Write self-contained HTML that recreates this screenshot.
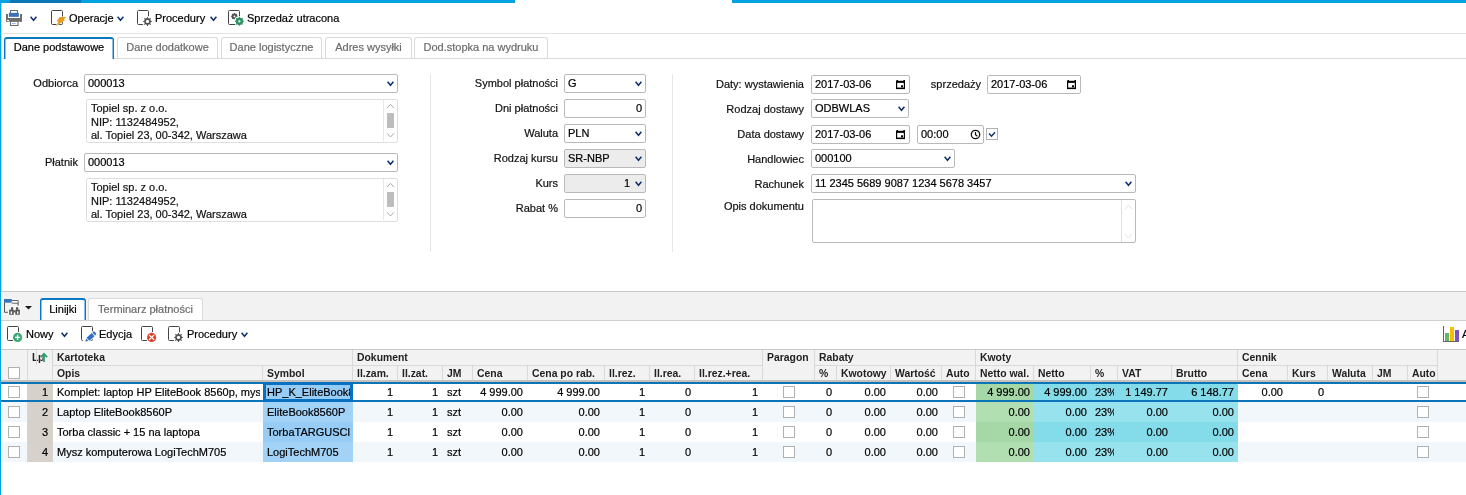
<!DOCTYPE html><html><head><meta charset="utf-8"><style>
html,body{margin:0;padding:0;}
body{width:1466px;height:495px;overflow:hidden;position:relative;will-change:transform;background:#fff;font-family:"Liberation Sans",sans-serif;font-size:11px;color:#000;}
div,svg{position:absolute;}
.t{white-space:nowrap;line-height:13px;height:13px;-webkit-text-stroke-width:0.2px;}
.hb{font-weight:bold;font-size:10.4px;color:#222;-webkit-text-stroke-width:0;}
.inp{border:1px solid #b9b9b9;border-radius:2px;background:#fff;box-sizing:border-box;}
.cb{border:1px solid #b0b0b0;background:#fff;box-sizing:border-box;}
</style></head><body>
<div style="left:0px;top:0px;width:1466px;height:3px;background:#00a3e0"></div>
<div style="left:10px;top:0px;width:71px;height:3px;background:#0a76b6"></div>
<div style="left:515px;top:0px;width:217px;height:3px;background:#fff"></div>
<div style="left:0px;top:0px;width:1px;height:495px;background:#00a3e0"></div>
<div style="left:1px;top:3px;width:1px;height:288px;background:#d8d0d0"></div>
<svg style="left:6px;top:10px" width="16" height="16" viewBox="0 0 16 16">
<rect x="4.5" y="0.5" width="7" height="4" fill="#fff" stroke="#6e6e6e" stroke-width="1.1"/>
<rect x="0" y="4" width="2" height="7.7" fill="#6e6e6e"/>
<rect x="14" y="4" width="2" height="7.7" fill="#6e6e6e"/>
<rect x="0" y="8" width="16" height="3.7" fill="#6e6e6e"/>
<rect x="1" y="10" width="2" height="1" fill="#fff"/>
<rect x="2.85" y="2.85" width="10" height="4" fill="#3a72b8"/>
<rect x="4.5" y="11.3" width="7.5" height="4.2" fill="#fff" stroke="#6e6e6e" stroke-width="1.1"/>
<rect x="6" y="13.2" width="3.7" height="0.7" fill="#6a9ad0"/>
</svg>
<svg style="left:30px;top:16px;overflow:visible" width="7" height="5" viewBox="0 0 7 5"><path d="M0.60 0.75 L3.50 4.25 L6.40 0.75" fill="none" stroke="#0d2f6b" stroke-width="1.5"/></svg>
<svg style="left:51px;top:10px" width="12" height="15" viewBox="0 0 12 15"><rect x="0.5" y="0.5" width="11" height="14" rx="1" fill="none" stroke="#444" stroke-width="1"/></svg>
<svg style="left:54px;top:15px" width="14" height="13" viewBox="54 15 14 13"><polygon points="59.6,16.9 66.2,16.9 63.6,19.7 65.6,19.7 55.8,26.2 58.6,21.6 56.4,21.6" fill="#e89c1e" stroke="#fff" stroke-width="0.9" stroke-linejoin="round" paint-order="stroke"/></svg>
<div class="t" style="left:69px;top:12px;">Operacje</div>
<svg style="left:117px;top:16px;overflow:visible" width="7" height="5" viewBox="0 0 7 5"><path d="M0.60 0.75 L3.50 4.25 L6.40 0.75" fill="none" stroke="#0d2f6b" stroke-width="1.5"/></svg>
<svg style="left:137px;top:10px" width="12" height="15" viewBox="0 0 12 15"><rect x="0.5" y="0.5" width="11" height="14" rx="1" fill="none" stroke="#444" stroke-width="1"/></svg>
<svg style="left:141px;top:15px" width="13" height="13" viewBox="141 15 13 13"><circle cx="147.5" cy="21.4" r="5.4" fill="#fff"/><polygon points="146.83,18.41 147.04,16.92 147.96,16.92 148.17,18.41 149.14,18.82 150.34,17.91 150.99,18.56 150.08,19.76 150.49,20.73 151.98,20.94 151.98,21.86 150.49,22.07 150.08,23.04 150.99,24.24 150.34,24.89 149.14,23.98 148.17,24.39 147.96,25.88 147.04,25.88 146.83,24.39 145.86,23.98 144.66,24.89 144.01,24.24 144.92,23.04 144.51,22.07 143.02,21.86 143.02,20.94 144.51,20.73 144.92,19.76 144.01,18.56 144.66,17.91 145.86,18.82" fill="#505050"/><circle cx="147.5" cy="21.4" r="3.12" fill="#505050"/><circle cx="147.5" cy="21.4" r="1.62" fill="#fff"/></svg>
<div class="t" style="left:155px;top:12px;">Procedury</div>
<svg style="left:210px;top:16px;overflow:visible" width="7" height="5" viewBox="0 0 7 5"><path d="M0.60 0.75 L3.50 4.25 L6.40 0.75" fill="none" stroke="#0d2f6b" stroke-width="1.5"/></svg>
<svg style="left:228px;top:10px" width="12" height="15" viewBox="0 0 12 15"><rect x="0.5" y="0.5" width="11" height="14" rx="1" fill="none" stroke="#444" stroke-width="1"/></svg>
<svg style="left:229px;top:11px" width="19" height="17" viewBox="229 11 19 17"><polygon points="233.90,13.74 234.14,12.92 234.86,12.92 235.10,13.74 235.96,14.09 236.71,13.69 237.21,14.19 236.81,14.94 237.16,15.80 237.98,16.04 237.98,16.76 237.16,17.00 236.81,17.86 237.21,18.61 236.71,19.11 235.96,18.71 235.10,19.06 234.86,19.88 234.14,19.88 233.90,19.06 233.04,18.71 232.29,19.11 231.79,18.61 232.19,17.86 231.84,17.00 231.02,16.76 231.02,16.04 231.84,15.80 232.19,14.94 231.79,14.19 232.29,13.69 233.04,14.09" fill="#555"/><circle cx="234.5" cy="16.4" r="2.78" fill="#555"/><circle cx="234.5" cy="16.4" r="0.84" fill="#fff"/><circle cx="239.4" cy="21.3" r="5.4" fill="#fff"/><polygon points="238.63,17.87 238.94,16.82 239.86,16.82 240.17,17.87 241.28,18.34 242.24,17.81 242.89,18.46 242.36,19.42 242.83,20.53 243.88,20.84 243.88,21.76 242.83,22.07 242.36,23.18 242.89,24.14 242.24,24.79 241.28,24.26 240.17,24.73 239.86,25.78 238.94,25.78 238.63,24.73 237.52,24.26 236.56,24.79 235.91,24.14 236.44,23.18 235.97,22.07 234.92,21.76 234.92,20.84 235.97,20.53 236.44,19.42 235.91,18.46 236.56,17.81 237.52,18.34" fill="#2f9462"/><circle cx="239.4" cy="21.3" r="3.58" fill="#2f9462"/><circle cx="239.4" cy="21.3" r="1.12" fill="#fff"/></svg>
<div class="t" style="left:247px;top:12px;">Sprzedaż utracona</div>
<div style="left:1px;top:33px;width:1465px;height:1px;background:#e3e3e3"></div>
<div style="left:1px;top:58px;width:1465px;height:1px;background:#d9d9d9"></div>
<div style="left:4px;top:37px;width:110px;height:22px;box-sizing:border-box;border:1px solid #0a78c2;border-top:2px solid #0a78c2;border-bottom:none;border-radius:3px 3px 0 0;background:#fff;box-shadow:inset 1px 0 0 #8cc0e6,inset -1px 0 0 #8cc0e6"></div>
<div class="t" style="left:4px;top:41px;width:110px;text-align:center;color:#000">Dane podstawowe</div>
<div style="left:117px;top:37px;width:101px;height:21px;box-sizing:border-box;border:1px solid #dadada;border-bottom:none;border-radius:3px 3px 0 0;background:#fff"></div>
<div class="t" style="left:117px;top:41px;width:101px;text-align:center;color:#6b6b6b">Dane dodatkowe</div>
<div style="left:221px;top:37px;width:101px;height:21px;box-sizing:border-box;border:1px solid #dadada;border-bottom:none;border-radius:3px 3px 0 0;background:#fff"></div>
<div class="t" style="left:221px;top:41px;width:101px;text-align:center;color:#6b6b6b">Dane logistyczne</div>
<div style="left:325px;top:37px;width:87px;height:21px;box-sizing:border-box;border:1px solid #dadada;border-bottom:none;border-radius:3px 3px 0 0;background:#fff"></div>
<div class="t" style="left:325px;top:41px;width:87px;text-align:center;color:#6b6b6b">Adres wysyłki</div>
<div style="left:414px;top:37px;width:134px;height:21px;box-sizing:border-box;border:1px solid #dadada;border-bottom:none;border-radius:3px 3px 0 0;background:#fff"></div>
<div class="t" style="left:414px;top:41px;width:134px;text-align:center;color:#6b6b6b">Dod.stopka na wydruku</div>
<div class="t" style="left:-322px;top:77px;width:400px;text-align:right;color:#111">Odbiorca</div>
<div class="inp" style="left:84px;top:74px;width:314px;height:19px;background:#fff"></div>
<div class="t" style="left:88px;top:77px;color:#000">000013</div>
<svg style="left:387px;top:81px;overflow:visible" width="7" height="5" viewBox="0 0 7 5"><path d="M0.60 0.75 L3.50 4.25 L6.40 0.75" fill="none" stroke="#0d2f6b" stroke-width="1.5"/></svg>
<div style="left:86px;top:99px;width:312px;height:44px;box-sizing:border-box;border:1px solid #dedede;border-radius:2px;background:#fff"></div>
<div style="left:383px;top:100px;width:1px;height:41px;background:#e6e6e6"></div>
<div class="t" style="left:91px;top:102px;color:#111">Topiel sp. z o.o.</div>
<div class="t" style="left:91px;top:116px;color:#111">NIP: 1132484952,</div>
<div class="t" style="left:91px;top:129px;color:#111">al. Topiel 23, 00-342, Warszawa</div>
<svg style="left:386px;top:103px" width="9" height="36" viewBox="0 0 9 36"><path d="M1.2 5 L4.5 1.3 L7.8 5 M1.2 30.3 L4.5 34 L7.8 30.3" fill="none" stroke="#ababab" stroke-width="1"/></svg>
<div style="left:387px;top:113px;width:7px;height:15px;background:#bdbdbd"></div>
<div class="t" style="left:-322px;top:156px;width:400px;text-align:right;color:#111">Płatnik</div>
<div class="inp" style="left:84px;top:153px;width:314px;height:19px;background:#fff"></div>
<div class="t" style="left:88px;top:156px;color:#000">000013</div>
<svg style="left:387px;top:160px;overflow:visible" width="7" height="5" viewBox="0 0 7 5"><path d="M0.60 0.75 L3.50 4.25 L6.40 0.75" fill="none" stroke="#0d2f6b" stroke-width="1.5"/></svg>
<div style="left:86px;top:178px;width:312px;height:44px;box-sizing:border-box;border:1px solid #dedede;border-radius:2px;background:#fff"></div>
<div style="left:383px;top:179px;width:1px;height:41px;background:#e6e6e6"></div>
<div class="t" style="left:91px;top:181px;color:#111">Topiel sp. z o.o.</div>
<div class="t" style="left:91px;top:195px;color:#111">NIP: 1132484952,</div>
<div class="t" style="left:91px;top:208px;color:#111">al. Topiel 23, 00-342, Warszawa</div>
<svg style="left:386px;top:182px" width="9" height="36" viewBox="0 0 9 36"><path d="M1.2 5 L4.5 1.3 L7.8 5 M1.2 30.3 L4.5 34 L7.8 30.3" fill="none" stroke="#ababab" stroke-width="1"/></svg>
<div style="left:387px;top:192px;width:7px;height:15px;background:#bdbdbd"></div>
<div style="left:430px;top:74px;width:1px;height:178px;background:#e6e6e6"></div>
<div style="left:672px;top:74px;width:1px;height:178px;background:#e6e6e6"></div>
<div class="t" style="left:158px;top:77px;width:400px;text-align:right;color:#111">Symbol płatności</div>
<div class="inp" style="left:564px;top:74px;width:82px;height:19px;background:#fff"></div>
<div class="t" style="left:568px;top:77px;color:#000">G</div>
<svg style="left:635px;top:81px;overflow:visible" width="7" height="5" viewBox="0 0 7 5"><path d="M0.60 0.75 L3.50 4.25 L6.40 0.75" fill="none" stroke="#0d2f6b" stroke-width="1.5"/></svg>
<div class="t" style="left:158px;top:102px;width:400px;text-align:right;color:#111">Dni płatności</div>
<div class="inp" style="left:564px;top:99px;width:82px;height:19px;background:#fff"></div>
<div class="t" style="left:242px;top:102px;width:400px;text-align:right;color:#000">0</div>
<div class="t" style="left:158px;top:127px;width:400px;text-align:right;color:#111">Waluta</div>
<div class="inp" style="left:564px;top:124px;width:82px;height:19px;background:#fff"></div>
<div class="t" style="left:568px;top:127px;color:#000">PLN</div>
<svg style="left:635px;top:131px;overflow:visible" width="7" height="5" viewBox="0 0 7 5"><path d="M0.60 0.75 L3.50 4.25 L6.40 0.75" fill="none" stroke="#0d2f6b" stroke-width="1.5"/></svg>
<div class="t" style="left:158px;top:152px;width:400px;text-align:right;color:#111">Rodzaj kursu</div>
<div class="inp" style="left:564px;top:149px;width:82px;height:19px;background:#ececec"></div>
<div class="t" style="left:568px;top:152px;color:#000">SR-NBP</div>
<svg style="left:635px;top:156px;overflow:visible" width="7" height="5" viewBox="0 0 7 5"><path d="M0.60 0.75 L3.50 4.25 L6.40 0.75" fill="none" stroke="#0d2f6b" stroke-width="1.5"/></svg>
<div class="t" style="left:158px;top:177px;width:400px;text-align:right;color:#111">Kurs</div>
<div class="inp" style="left:564px;top:174px;width:82px;height:19px;background:#ececec"></div>
<div class="t" style="left:230px;top:177px;width:400px;text-align:right;color:#000">1</div>
<svg style="left:635px;top:181px;overflow:visible" width="7" height="5" viewBox="0 0 7 5"><path d="M0.60 0.75 L3.50 4.25 L6.40 0.75" fill="none" stroke="#0d2f6b" stroke-width="1.5"/></svg>
<div class="t" style="left:158px;top:202px;width:400px;text-align:right;color:#111">Rabat %</div>
<div class="inp" style="left:564px;top:199px;width:82px;height:19px;background:#fff"></div>
<div class="t" style="left:242px;top:202px;width:400px;text-align:right;color:#000">0</div>
<div class="t" style="left:404px;top:78px;width:400px;text-align:right;color:#111">Daty: wystawienia</div>
<div class="inp" style="left:811px;top:75px;width:99px;height:19px"></div>
<div class="t" style="left:815px;top:78px;color:#000">2017-03-06</div>
<svg style="left:896px;top:80px" width="9" height="10" viewBox="0 0 9 10"><rect x="0.6" y="1.8" width="7.8" height="6.6" fill="none" stroke="#000" stroke-width="1.2"/><rect x="0" y="0.8" width="9" height="2" fill="#000"/><rect x="0.5" y="0" width="1.5" height="1" fill="#000"/><rect x="7.4" y="0" width="1.5" height="1" fill="#000"/><rect x="5" y="5.3" width="2" height="2" fill="#000"/><rect x="0" y="7.7" width="9" height="1.4" fill="#000"/></svg>
<div class="t" style="left:581px;top:78px;width:400px;text-align:right;color:#111">sprzedaży</div>
<div class="inp" style="left:987px;top:75px;width:94px;height:19px"></div>
<div class="t" style="left:991px;top:78px;color:#000">2017-03-06</div>
<svg style="left:1067px;top:80px" width="9" height="10" viewBox="0 0 9 10"><rect x="0.6" y="1.8" width="7.8" height="6.6" fill="none" stroke="#000" stroke-width="1.2"/><rect x="0" y="0.8" width="9" height="2" fill="#000"/><rect x="0.5" y="0" width="1.5" height="1" fill="#000"/><rect x="7.4" y="0" width="1.5" height="1" fill="#000"/><rect x="5" y="5.3" width="2" height="2" fill="#000"/><rect x="0" y="7.7" width="9" height="1.4" fill="#000"/></svg>
<div class="t" style="left:404px;top:103px;width:400px;text-align:right;color:#111">Rodzaj dostawy</div>
<div class="inp" style="left:811px;top:99px;width:98px;height:19px;background:#fff"></div>
<div class="t" style="left:815px;top:102px;color:#000">ODBWLAS</div>
<svg style="left:898px;top:106px;overflow:visible" width="7" height="5" viewBox="0 0 7 5"><path d="M0.60 0.75 L3.50 4.25 L6.40 0.75" fill="none" stroke="#0d2f6b" stroke-width="1.5"/></svg>
<div class="t" style="left:404px;top:128px;width:400px;text-align:right;color:#111">Data dostawy</div>
<div class="inp" style="left:811px;top:125px;width:99px;height:19px"></div>
<div class="t" style="left:815px;top:128px;color:#000">2017-03-06</div>
<svg style="left:896px;top:130px" width="9" height="10" viewBox="0 0 9 10"><rect x="0.6" y="1.8" width="7.8" height="6.6" fill="none" stroke="#000" stroke-width="1.2"/><rect x="0" y="0.8" width="9" height="2" fill="#000"/><rect x="0.5" y="0" width="1.5" height="1" fill="#000"/><rect x="7.4" y="0" width="1.5" height="1" fill="#000"/><rect x="5" y="5.3" width="2" height="2" fill="#000"/><rect x="0" y="7.7" width="9" height="1.4" fill="#000"/></svg>
<div class="inp" style="left:917px;top:125px;width:67px;height:19px"></div>
<div class="t" style="left:921px;top:128px;color:#000">00:00</div>
<svg style="left:970px;top:129px" width="11" height="11" viewBox="0 0 11 11"><circle cx="5.5" cy="5.5" r="4.2" fill="none" stroke="#111" stroke-width="1.3"/><path d="M5.5 3 V5.7 L7.3 7.2" fill="none" stroke="#111" stroke-width="1.2"/></svg>
<div class="cb" style="left:986px;top:128px;width:12px;height:12px"></div>
<svg style="left:986px;top:128px" width="12" height="12" viewBox="986 128 12 12"><path d="M989.1 133.5 L991.5 136.3 L995 132.3" fill="none" stroke="#0d2f6b" stroke-width="1.4"/></svg>
<div class="t" style="left:404px;top:153px;width:400px;text-align:right;color:#111">Handlowiec</div>
<div class="inp" style="left:811px;top:149px;width:144px;height:19px;background:#fff"></div>
<div class="t" style="left:815px;top:152px;color:#000">000100</div>
<svg style="left:944px;top:156px;overflow:visible" width="7" height="5" viewBox="0 0 7 5"><path d="M0.60 0.75 L3.50 4.25 L6.40 0.75" fill="none" stroke="#0d2f6b" stroke-width="1.5"/></svg>
<div class="t" style="left:404px;top:178px;width:400px;text-align:right;color:#111">Rachunek</div>
<div class="inp" style="left:811px;top:174px;width:325px;height:19px;background:#fff"></div>
<div class="t" style="left:815px;top:177px;color:#000">11 2345 5689 9087 1234 5678 3457</div>
<svg style="left:1125px;top:181px;overflow:visible" width="7" height="5" viewBox="0 0 7 5"><path d="M0.60 0.75 L3.50 4.25 L6.40 0.75" fill="none" stroke="#0d2f6b" stroke-width="1.5"/></svg>
<div class="t" style="left:404px;top:200px;width:400px;text-align:right;color:#111">Opis dokumentu</div>
<div style="left:812px;top:199px;width:324px;height:44px;box-sizing:border-box;border:1px solid #b9b9b9;border-radius:2px"></div>
<div style="left:1121px;top:200px;width:1px;height:42px;background:#e0e0e0"></div>
<svg style="left:1124px;top:204px" width="9" height="36" viewBox="0 0 9 36"><path d="M1.2 5 L4.5 1.3 L7.8 5 M1.2 30.3 L4.5 34 L7.8 30.3" fill="none" stroke="#e2e2e2" stroke-width="1"/></svg>
<div style="left:1px;top:291px;width:1465px;height:1px;background:#c9c9c9"></div>
<div style="left:1px;top:292px;width:1465px;height:28px;background:#f2f2f2"></div>
<div style="left:1px;top:320px;width:1465px;height:1px;background:#cfcfcf"></div>
<svg style="left:4px;top:299px" width="17" height="16" viewBox="4 299 17 16">
<rect x="4" y="299" width="7.8" height="3.7" fill="#3a72b8"/>
<path d="M11.8 300.6 H18.1 V305.6" stroke="#555" fill="none" stroke-width="1"/>
<rect x="11.8" y="301.1" width="5.8" height="1.7" fill="#fff"/><path d="M11.8 303.2 H18.1" stroke="#555" fill="none" stroke-width="0.9"/>
<path d="M4.5 302.7 V312.3 H7.9" stroke="#555" fill="none" stroke-width="1"/>
<path d="M10.4 306.6 H13.6 V309.6 H15.4 V306.6 H18.6 V309 L20.6 310.5 V315.5 H8.6 V310.5 L10.4 309 Z" fill="#fff"/>
<rect x="11" y="307.2" width="2.2" height="2.6" fill="#555"/><rect x="16" y="307.2" width="2.2" height="2.6" fill="#555"/>
<rect x="9.2" y="309.4" width="4.6" height="5.4" rx="0.6" fill="#555"/><rect x="15.3" y="309.4" width="4.6" height="5.4" rx="0.6" fill="#555"/>
<rect x="13.6" y="310.4" width="1.8" height="2" fill="#555"/>
<rect x="10.7" y="311.4" width="1.4" height="2.5" fill="#fff"/><rect x="17" y="311.4" width="1.4" height="2.5" fill="#fff"/>
</svg>
<svg style="left:25px;top:306px" width="7" height="4" viewBox="0 0 7 4"><polygon points="0,0 7,0 3.5,3.5" fill="#1a1a1a"/></svg>
<div style="left:40px;top:298px;width:46px;height:22px;box-sizing:border-box;border:1px solid #0a78c2;border-top:2px solid #0a78c2;border-bottom:none;border-radius:3px 3px 0 0;background:#fff;box-shadow:inset 1px 0 0 #8cc0e6,inset -1px 0 0 #8cc0e6"></div>
<div class="t" style="left:40px;top:303px;width:46px;text-align:center;color:#000">Linijki</div>
<div style="left:88px;top:298px;width:115px;height:22px;box-sizing:border-box;border:1px solid #dadada;border-bottom:none;border-radius:3px 3px 0 0;background:#fff"></div>
<div class="t" style="left:88px;top:303px;width:115px;text-align:center;color:#6b6b6b">Terminarz płatności</div>
<svg style="left:7px;top:326px" width="12" height="15" viewBox="0 0 12 15"><rect x="0.5" y="0.5" width="11" height="14" rx="1" fill="none" stroke="#444" stroke-width="1"/></svg>
<svg style="left:11px;top:331px" width="13" height="13" viewBox="11 331 13 13"><circle cx="17.6" cy="337.4" r="5.6" fill="#fff"/><circle cx="17.6" cy="337.4" r="4.6" fill="#3aa872"/><path d="M17.6 334.8 V340 M15 337.4 H20.2" stroke="#fff" stroke-width="1.4"/></svg>
<div class="t" style="left:26px;top:328px;">Nowy</div>
<svg style="left:61px;top:332px;overflow:visible" width="7" height="5" viewBox="0 0 7 5"><path d="M0.60 0.75 L3.50 4.25 L6.40 0.75" fill="none" stroke="#0d2f6b" stroke-width="1.5"/></svg>
<svg style="left:81px;top:326px" width="12" height="15" viewBox="0 0 12 15"><rect x="0.5" y="0.5" width="11" height="14" rx="1" fill="none" stroke="#444" stroke-width="1"/></svg>
<svg style="left:83px;top:329px" width="15" height="14" viewBox="83 329 15 14"><g transform="translate(85.3 341.6) rotate(-42)">
<polygon points="-1,-2.9 13.8,-2.9 13.8,2.9 -1,2.9 -1.5,0" fill="#fff"/>
<polygon points="0,0 2.8,-1.6 2.8,1.6" fill="#2f6fc2"/>
<rect x="3.6" y="-2.1" width="6.9" height="4.2" fill="#2f6fc2"/>
<path d="M11.3 -2.1 H11.8 A1.8 2.1 0 0 1 11.8 2.1 H11.3 Z" fill="#2f6fc2"/>
</g></svg>
<div class="t" style="left:99px;top:328px;">Edycja</div>
<svg style="left:141px;top:326px" width="12" height="15" viewBox="0 0 12 15"><rect x="0.5" y="0.5" width="11" height="14" rx="1" fill="none" stroke="#444" stroke-width="1"/></svg>
<svg style="left:145px;top:331px" width="13" height="13" viewBox="145 331 13 13"><circle cx="151.6" cy="337.4" r="5.6" fill="#fff"/><circle cx="151.6" cy="337.4" r="4.6" fill="#d9472f"/><path d="M149.1 334.9 L154.1 339.9 M154.1 334.9 L149.1 339.9" stroke="#fff" stroke-width="1.3"/></svg>
<svg style="left:168px;top:326px" width="12" height="15" viewBox="0 0 12 15"><rect x="0.5" y="0.5" width="11" height="14" rx="1" fill="none" stroke="#444" stroke-width="1"/></svg>
<svg style="left:172px;top:331px" width="13" height="13" viewBox="172 331 13 13"><circle cx="178.5" cy="337.4" r="5.4" fill="#fff"/><polygon points="177.83,334.41 178.04,332.92 178.96,332.92 179.17,334.41 180.14,334.82 181.34,333.91 181.99,334.56 181.08,335.76 181.49,336.73 182.98,336.94 182.98,337.86 181.49,338.07 181.08,339.04 181.99,340.24 181.34,340.89 180.14,339.98 179.17,340.39 178.96,341.88 178.04,341.88 177.83,340.39 176.86,339.98 175.66,340.89 175.01,340.24 175.92,339.04 175.51,338.07 174.02,337.86 174.02,336.94 175.51,336.73 175.92,335.76 175.01,334.56 175.66,333.91 176.86,334.82" fill="#505050"/><circle cx="178.5" cy="337.4" r="3.12" fill="#505050"/><circle cx="178.5" cy="337.4" r="1.62" fill="#fff"/></svg>
<div class="t" style="left:187px;top:328px;">Procedury</div>
<svg style="left:241px;top:332px;overflow:visible" width="7" height="5" viewBox="0 0 7 5"><path d="M0.60 0.75 L3.50 4.25 L6.40 0.75" fill="none" stroke="#0d2f6b" stroke-width="1.5"/></svg>
<svg style="left:1442px;top:325px" width="18" height="18" viewBox="1442 325 18 18"><rect x="1443" y="326" width="1" height="16" fill="#666"/><rect x="1443" y="341" width="16" height="1" fill="#666"/><rect x="1445" y="333" width="4" height="8" fill="#62b866"/><rect x="1450" y="327" width="4" height="14" fill="#fbbc05"/><rect x="1455" y="330" width="4" height="11" fill="#7a52c4"/></svg>
<div class="t" style="left:1462px;top:328px;">A</div>
<div style="left:1px;top:349px;width:1465px;height:1px;background:#c8c8c8"></div>
<div style="left:1px;top:350px;width:1465px;height:30px;background:#f2f2f2"></div>
<div style="left:1px;top:380px;width:1465px;height:2px;background:#c6c1bc"></div>
<div style="left:27px;top:350px;width:1px;height:30px;background:#d9d9d9"></div>
<div style="left:52px;top:350px;width:1px;height:30px;background:#d9d9d9"></div>
<div style="left:262px;top:365px;width:1px;height:15px;background:#d9d9d9"></div>
<div style="left:352px;top:365px;width:1px;height:15px;background:#d9d9d9"></div>
<div style="left:397px;top:365px;width:1px;height:15px;background:#d9d9d9"></div>
<div style="left:442px;top:365px;width:1px;height:15px;background:#d9d9d9"></div>
<div style="left:472px;top:365px;width:1px;height:15px;background:#d9d9d9"></div>
<div style="left:527px;top:365px;width:1px;height:15px;background:#d9d9d9"></div>
<div style="left:604px;top:365px;width:1px;height:15px;background:#d9d9d9"></div>
<div style="left:649px;top:365px;width:1px;height:15px;background:#d9d9d9"></div>
<div style="left:694px;top:365px;width:1px;height:15px;background:#d9d9d9"></div>
<div style="left:762px;top:365px;width:1px;height:15px;background:#d9d9d9"></div>
<div style="left:814px;top:350px;width:1px;height:30px;background:#d9d9d9"></div>
<div style="left:836px;top:365px;width:1px;height:15px;background:#d9d9d9"></div>
<div style="left:890px;top:365px;width:1px;height:15px;background:#d9d9d9"></div>
<div style="left:941px;top:365px;width:1px;height:15px;background:#d9d9d9"></div>
<div style="left:975px;top:365px;width:1px;height:15px;background:#d9d9d9"></div>
<div style="left:1033px;top:365px;width:1px;height:15px;background:#d9d9d9"></div>
<div style="left:1090px;top:365px;width:1px;height:15px;background:#d9d9d9"></div>
<div style="left:1117px;top:365px;width:1px;height:15px;background:#d9d9d9"></div>
<div style="left:1171px;top:365px;width:1px;height:15px;background:#d9d9d9"></div>
<div style="left:1237px;top:365px;width:1px;height:15px;background:#d9d9d9"></div>
<div style="left:1287px;top:365px;width:1px;height:15px;background:#d9d9d9"></div>
<div style="left:1327px;top:365px;width:1px;height:15px;background:#d9d9d9"></div>
<div style="left:1372px;top:365px;width:1px;height:15px;background:#d9d9d9"></div>
<div style="left:1407px;top:365px;width:1px;height:15px;background:#d9d9d9"></div>
<div style="left:1437px;top:365px;width:1px;height:15px;background:#d9d9d9"></div>
<div style="left:352px;top:350px;width:1px;height:15px;background:#d9d9d9"></div>
<div style="left:52px;top:365px;width:300px;height:1px;background:#d9d9d9"></div>
<div class="t hb" style="left:57px;top:351px;">Kartoteka</div>
<div style="left:762px;top:350px;width:1px;height:15px;background:#d9d9d9"></div>
<div style="left:352px;top:365px;width:410px;height:1px;background:#d9d9d9"></div>
<div class="t hb" style="left:357px;top:351px;">Dokument</div>
<div style="left:975px;top:350px;width:1px;height:15px;background:#d9d9d9"></div>
<div style="left:814px;top:365px;width:161px;height:1px;background:#d9d9d9"></div>
<div class="t hb" style="left:819px;top:351px;">Rabaty</div>
<div style="left:1237px;top:350px;width:1px;height:15px;background:#d9d9d9"></div>
<div style="left:975px;top:365px;width:262px;height:1px;background:#d9d9d9"></div>
<div class="t hb" style="left:980px;top:351px;">Kwoty</div>
<div style="left:1437px;top:350px;width:1px;height:15px;background:#d9d9d9"></div>
<div style="left:1237px;top:365px;width:200px;height:1px;background:#d9d9d9"></div>
<div class="t hb" style="left:1242px;top:351px;">Cennik</div>
<div class="t hb" style="left:57px;top:367px;">Opis</div>
<div class="t hb" style="left:267px;top:367px;">Symbol</div>
<div class="t hb" style="left:357px;top:367px;">Il.zam.</div>
<div class="t hb" style="left:402px;top:367px;">Il.zat.</div>
<div class="t hb" style="left:447px;top:367px;">JM</div>
<div class="t hb" style="left:477px;top:367px;">Cena</div>
<div class="t hb" style="left:532px;top:367px;">Cena po rab.</div>
<div class="t hb" style="left:609px;top:367px;">Il.rez.</div>
<div class="t hb" style="left:654px;top:367px;">Il.rea.</div>
<div class="t hb" style="left:699px;top:367px;">Il.rez.+rea.</div>
<div class="t hb" style="left:767px;top:351px;">Paragon</div>
<div class="t hb" style="left:819px;top:367px;">%</div>
<div class="t hb" style="left:841px;top:367px;">Kwotowy</div>
<div class="t hb" style="left:895px;top:367px;">Wartość</div>
<div class="t hb" style="left:946px;top:367px;">Auto</div>
<div class="t hb" style="left:980px;top:367px;">Netto wal.</div>
<div class="t hb" style="left:1038px;top:367px;">Netto</div>
<div class="t hb" style="left:1095px;top:367px;">%</div>
<div class="t hb" style="left:1122px;top:367px;">VAT</div>
<div class="t hb" style="left:1176px;top:367px;">Brutto</div>
<div class="t hb" style="left:1242px;top:367px;">Cena</div>
<div class="t hb" style="left:1292px;top:367px;">Kurs</div>
<div class="t hb" style="left:1332px;top:367px;">Waluta</div>
<div class="t hb" style="left:1377px;top:367px;">JM</div>
<div class="t hb" style="left:1412px;top:367px;">Auto</div>
<div class="t hb" style="left:32px;top:351px;">L</div>
<div style="left:36px;top:350px;width:1px;height:15px;background:#d5d5d5"></div>
<div class="t hb" style="left:38px;top:351px;">p</div>
<svg style="left:40px;top:352px" width="9" height="11" viewBox="0 0 9 11"><path d="M4 10 V2 M0.9 5.2 L4 1.8 L7.1 5.2" fill="none" stroke="#fff" stroke-width="2.6" opacity="0.6"/><path d="M4 10 V2 M0.9 5.2 L4 1.8 L7.1 5.2" fill="none" stroke="#2f9d6c" stroke-width="1.8"/></svg>
<div class="cb" style="left:8px;top:367px;width:12px;height:12px"></div>
<div style="left:28px;top:382px;width:25px;height:20px;background:#d6d2cb"></div>
<div style="left:27px;top:382px;width:1px;height:20px;background:#c5d9ea"></div>
<div style="left:263px;top:382px;width:90px;height:20px;background:#97ccf7"></div>
<div style="left:976px;top:382px;width:58px;height:20px;background:#a6d8a7"></div>
<div style="left:1034px;top:382px;width:204px;height:20px;background:#84dcea"></div>
<div class="cb" style="left:8px;top:386px;width:12px;height:12px"></div>
<div class="t" style="left:-352px;top:386px;width:400px;text-align:right;">1</div>
<div class="t" style="left:57px;top:386px;width:203px;overflow:hidden">Komplet: laptop HP EliteBook 8560p, mys</div>
<div class="t" style="left:267px;top:386px;width:83px;overflow:hidden">HP_K_EliteBook8560p</div>
<div class="t" style="left:-7px;top:386px;width:400px;text-align:right;">1</div>
<div class="t" style="left:38px;top:386px;width:400px;text-align:right;">1</div>
<div class="t" style="left:447px;top:386px;">szt</div>
<div class="t" style="left:123px;top:386px;width:400px;text-align:right;">4 999.00</div>
<div class="t" style="left:200px;top:386px;width:400px;text-align:right;">4 999.00</div>
<div class="t" style="left:245px;top:386px;width:400px;text-align:right;">1</div>
<div class="t" style="left:291px;top:386px;width:400px;text-align:right;">0</div>
<div class="t" style="left:358px;top:386px;width:400px;text-align:right;">1</div>
<div class="cb" style="left:783px;top:386px;width:12px;height:12px"></div>
<div class="t" style="left:432px;top:386px;width:400px;text-align:right;">0</div>
<div class="t" style="left:486px;top:386px;width:400px;text-align:right;">0.00</div>
<div class="t" style="left:538px;top:386px;width:400px;text-align:right;">0.00</div>
<div class="cb" style="left:953px;top:386px;width:12px;height:12px"></div>
<div class="t" style="left:630px;top:386px;width:400px;text-align:right;">4 999.00</div>
<div class="t" style="left:687px;top:386px;width:400px;text-align:right;">4 999.00</div>
<div class="t" style="left:1095px;top:386px;width:19px;overflow:hidden">23%</div>
<div class="t" style="left:768px;top:386px;width:400px;text-align:right;">1 149.77</div>
<div class="t" style="left:834px;top:386px;width:400px;text-align:right;">6 148.77</div>
<div class="t" style="left:883px;top:386px;width:400px;text-align:right;">0.00</div>
<div class="t" style="left:924px;top:386px;width:400px;text-align:right;">0</div>
<div class="cb" style="left:1417px;top:386px;width:12px;height:12px"></div>
<div style="left:1px;top:402px;width:1465px;height:20px;background:#f2f7fb"></div>
<div style="left:28px;top:402px;width:25px;height:20px;background:#d6d2cb"></div>
<div style="left:27px;top:402px;width:1px;height:20px;background:#c5d9ea"></div>
<div style="left:263px;top:402px;width:90px;height:20px;background:#a3d2f7"></div>
<div style="left:976px;top:402px;width:58px;height:20px;background:#b2dfb2"></div>
<div style="left:1034px;top:402px;width:204px;height:20px;background:#98e2ee"></div>
<div class="cb" style="left:8px;top:406px;width:12px;height:12px"></div>
<div class="t" style="left:-352px;top:406px;width:400px;text-align:right;">2</div>
<div class="t" style="left:57px;top:406px;width:203px;overflow:hidden">Laptop EliteBook8560P</div>
<div class="t" style="left:267px;top:406px;width:83px;overflow:hidden">EliteBook8560P</div>
<div class="t" style="left:-7px;top:406px;width:400px;text-align:right;">1</div>
<div class="t" style="left:38px;top:406px;width:400px;text-align:right;">1</div>
<div class="t" style="left:447px;top:406px;">szt</div>
<div class="t" style="left:123px;top:406px;width:400px;text-align:right;">0.00</div>
<div class="t" style="left:200px;top:406px;width:400px;text-align:right;">0.00</div>
<div class="t" style="left:245px;top:406px;width:400px;text-align:right;">1</div>
<div class="t" style="left:291px;top:406px;width:400px;text-align:right;">0</div>
<div class="t" style="left:358px;top:406px;width:400px;text-align:right;">1</div>
<div class="cb" style="left:783px;top:406px;width:12px;height:12px"></div>
<div class="t" style="left:432px;top:406px;width:400px;text-align:right;">0</div>
<div class="t" style="left:486px;top:406px;width:400px;text-align:right;">0.00</div>
<div class="t" style="left:538px;top:406px;width:400px;text-align:right;">0.00</div>
<div class="cb" style="left:953px;top:406px;width:12px;height:12px"></div>
<div class="t" style="left:630px;top:406px;width:400px;text-align:right;">0.00</div>
<div class="t" style="left:687px;top:406px;width:400px;text-align:right;">0.00</div>
<div class="t" style="left:1095px;top:406px;width:19px;overflow:hidden">23%</div>
<div class="t" style="left:768px;top:406px;width:400px;text-align:right;">0.00</div>
<div class="t" style="left:834px;top:406px;width:400px;text-align:right;">0.00</div>
<div class="cb" style="left:1417px;top:406px;width:12px;height:12px"></div>
<div style="left:28px;top:422px;width:25px;height:20px;background:#d6d2cb"></div>
<div style="left:27px;top:422px;width:1px;height:20px;background:#c5d9ea"></div>
<div style="left:263px;top:422px;width:90px;height:20px;background:#97ccf7"></div>
<div style="left:976px;top:422px;width:58px;height:20px;background:#a6d8a7"></div>
<div style="left:1034px;top:422px;width:204px;height:20px;background:#84dcea"></div>
<div class="cb" style="left:8px;top:426px;width:12px;height:12px"></div>
<div class="t" style="left:-352px;top:426px;width:400px;text-align:right;">3</div>
<div class="t" style="left:57px;top:426px;width:203px;overflow:hidden">Torba classic + 15 na laptopa</div>
<div class="t" style="left:267px;top:426px;width:83px;overflow:hidden">TorbaTARGUSClassic</div>
<div class="t" style="left:-7px;top:426px;width:400px;text-align:right;">1</div>
<div class="t" style="left:38px;top:426px;width:400px;text-align:right;">1</div>
<div class="t" style="left:447px;top:426px;">szt</div>
<div class="t" style="left:123px;top:426px;width:400px;text-align:right;">0.00</div>
<div class="t" style="left:200px;top:426px;width:400px;text-align:right;">0.00</div>
<div class="t" style="left:245px;top:426px;width:400px;text-align:right;">1</div>
<div class="t" style="left:291px;top:426px;width:400px;text-align:right;">0</div>
<div class="t" style="left:358px;top:426px;width:400px;text-align:right;">1</div>
<div class="cb" style="left:783px;top:426px;width:12px;height:12px"></div>
<div class="t" style="left:432px;top:426px;width:400px;text-align:right;">0</div>
<div class="t" style="left:486px;top:426px;width:400px;text-align:right;">0.00</div>
<div class="t" style="left:538px;top:426px;width:400px;text-align:right;">0.00</div>
<div class="cb" style="left:953px;top:426px;width:12px;height:12px"></div>
<div class="t" style="left:630px;top:426px;width:400px;text-align:right;">0.00</div>
<div class="t" style="left:687px;top:426px;width:400px;text-align:right;">0.00</div>
<div class="t" style="left:1095px;top:426px;width:19px;overflow:hidden">23%</div>
<div class="t" style="left:768px;top:426px;width:400px;text-align:right;">0.00</div>
<div class="t" style="left:834px;top:426px;width:400px;text-align:right;">0.00</div>
<div class="cb" style="left:1417px;top:426px;width:12px;height:12px"></div>
<div style="left:1px;top:442px;width:1465px;height:20px;background:#f2f7fb"></div>
<div style="left:28px;top:442px;width:25px;height:20px;background:#d6d2cb"></div>
<div style="left:27px;top:442px;width:1px;height:20px;background:#c5d9ea"></div>
<div style="left:263px;top:442px;width:90px;height:20px;background:#a3d2f7"></div>
<div style="left:976px;top:442px;width:58px;height:20px;background:#b2dfb2"></div>
<div style="left:1034px;top:442px;width:204px;height:20px;background:#98e2ee"></div>
<div class="cb" style="left:8px;top:446px;width:12px;height:12px"></div>
<div class="t" style="left:-352px;top:446px;width:400px;text-align:right;">4</div>
<div class="t" style="left:57px;top:446px;width:203px;overflow:hidden">Mysz komputerowa LogiTechM705</div>
<div class="t" style="left:267px;top:446px;width:83px;overflow:hidden">LogiTechM705</div>
<div class="t" style="left:-7px;top:446px;width:400px;text-align:right;">1</div>
<div class="t" style="left:38px;top:446px;width:400px;text-align:right;">1</div>
<div class="t" style="left:447px;top:446px;">szt</div>
<div class="t" style="left:123px;top:446px;width:400px;text-align:right;">0.00</div>
<div class="t" style="left:200px;top:446px;width:400px;text-align:right;">0.00</div>
<div class="t" style="left:245px;top:446px;width:400px;text-align:right;">1</div>
<div class="t" style="left:291px;top:446px;width:400px;text-align:right;">0</div>
<div class="t" style="left:358px;top:446px;width:400px;text-align:right;">1</div>
<div class="cb" style="left:783px;top:446px;width:12px;height:12px"></div>
<div class="t" style="left:432px;top:446px;width:400px;text-align:right;">0</div>
<div class="t" style="left:486px;top:446px;width:400px;text-align:right;">0.00</div>
<div class="t" style="left:538px;top:446px;width:400px;text-align:right;">0.00</div>
<div class="cb" style="left:953px;top:446px;width:12px;height:12px"></div>
<div class="t" style="left:630px;top:446px;width:400px;text-align:right;">0.00</div>
<div class="t" style="left:687px;top:446px;width:400px;text-align:right;">0.00</div>
<div class="t" style="left:1095px;top:446px;width:19px;overflow:hidden">23%</div>
<div class="t" style="left:768px;top:446px;width:400px;text-align:right;">0.00</div>
<div class="t" style="left:834px;top:446px;width:400px;text-align:right;">0.00</div>
<div class="cb" style="left:1417px;top:446px;width:12px;height:12px"></div>
<div style="left:1px;top:382px;width:1465px;height:2px;background:#0b74b9"></div>
<div style="left:1px;top:400px;width:1465px;height:2px;background:#0b74b9"></div>
<div style="left:263px;top:382px;width:90px;height:20px;box-sizing:border-box;border:3px solid #0a70c0;background:#97ccf7"></div>
<div class="t" style="left:267px;top:386px;width:83px;overflow:hidden">HP_K_EliteBook8560p</div>
</body></html>
